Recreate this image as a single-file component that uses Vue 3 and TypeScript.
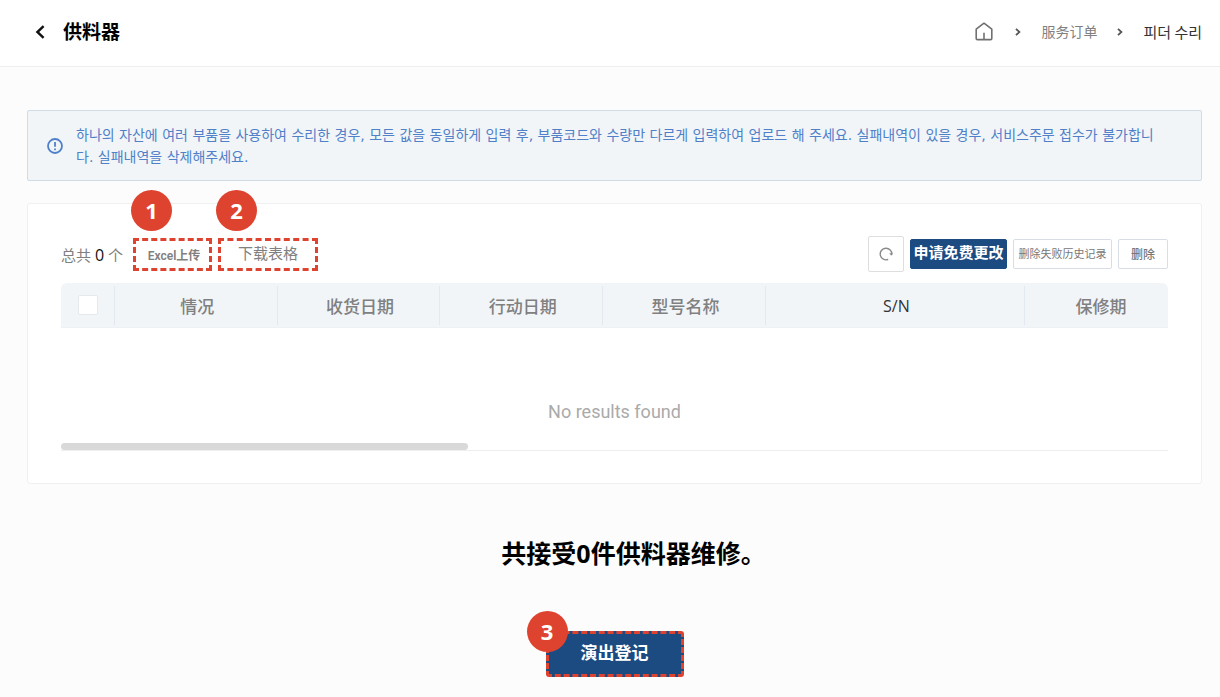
<script setup lang="ts">
import { ref } from 'vue'

interface Column {
  label: string
  cls: string
}

const columns: Column[] = [
  { label: '情况', cls: 'std' },
  { label: '收货日期', cls: 'std' },
  { label: '行动日期', cls: 'std' },
  { label: '型号名称', cls: 'std' },
  { label: 'S/N', cls: 'serial' },
  { label: '保修期', cls: 'warranty' },
]

const total = ref<number>(0)
const allSelected = ref<boolean>(false)
</script>

<template>
  <div class="page">
    <header class="topbar">
      <button class="back" type="button" aria-label="Back">
        <svg width="10" height="14" viewBox="0 0 10 14" fill="none" stroke="#111" stroke-width="2.4">
          <path d="M8.6 1.2 2.4 7l6.2 5.8" />
        </svg>
      </button>
      <h1>供料器</h1>
      <nav class="crumbs">
        <a href="#" class="home" aria-label="Home">
          <svg width="18" height="19" viewBox="0 0 18 19" fill="none" stroke="#707070" stroke-width="1.6" stroke-linejoin="round">
            <path d="M1.2 7.2 9 1.2l7.8 6v9.2a1.2 1.2 0 0 1-1.2 1.2H2.4a1.2 1.2 0 0 1-1.2-1.2z" />
            <path d="M9 17.4v-6.6" />
          </svg>
        </a>
        <svg class="sep" width="6" height="8" viewBox="0 0 6 8" fill="none" stroke="#555" stroke-width="1.8">
          <path d="M1 .8 4.4 4 1 7.2" />
        </svg>
        <a href="#">服务订单</a>
        <svg class="sep" width="6" height="8" viewBox="0 0 6 8" fill="none" stroke="#555" stroke-width="1.8">
          <path d="M1 .8 4.4 4 1 7.2" />
        </svg>
        <span class="current">피더 수리</span>
      </nav>
    </header>

    <main>
      <section class="notice">
        <svg width="16" height="16" viewBox="0 0 16 16" fill="none" stroke="#4f80c8" stroke-width="1.8">
          <circle cx="8" cy="8" r="7" />
          <path d="M8 4v4.8M8 10.4v1.8" />
        </svg>
        <p>
          하나의 자산에 여러 부품을 사용하여 수리한 경우, 모든 값을 동일하게 입력 후, 부품코드와 수량만 다르게 입력하여 업로드 해 주세요. 실패내역이 있을 경우, 서비스주문 접수가 불가합니다. 실패내역을 삭제해주세요.
        </p>
      </section>

      <section class="card">
        <div class="toolbar">
          <p class="count">总共 <b>{{ total }}</b> 个</p>
          <button class="marked upload" type="button">Excel上传<span class="badge">1</span></button>
          <button class="marked download" type="button">下载表格<span class="badge">2</span></button>
          <div class="actions">
            <button class="refresh" type="button" aria-label="Refresh">
              <svg width="14" height="14" viewBox="0 0 14 14" fill="none" stroke="#8a8a8a" stroke-width="1.4">
                <path d="M9.2 12.4A5.8 5.8 0 1 1 12.8 7.6" />
                <path d="M10.2 6.2h3.6l-1.5 2.6z" fill="#8a8a8a" stroke="none" />
              </svg>
            </button>
            <button class="primary" type="button">申请免费更改</button>
            <button class="history" type="button">删除失败历史记录</button>
            <button class="remove" type="button">删除</button>
          </div>
        </div>

        <table>
          <colgroup>
            <col class="check" />
            <col v-for="c in columns" :key="c.label" :class="c.cls" />
          </colgroup>
          <thead>
            <tr>
              <th><input v-model="allSelected" type="checkbox" aria-label="Select all" /></th>
              <th v-for="c in columns" :key="c.label" :class="c.cls">{{ c.label }}</th>
            </tr>
          </thead>
          <tbody>
            <tr>
              <td :colspan="columns.length + 1">No results found</td>
            </tr>
          </tbody>
        </table>
        <div class="track"><div class="thumb"></div></div>
      </section>

      <p class="summary">共接受{{ total }}件供料器维修。</p>
      <button class="marked submit" type="button">演出登记<span class="badge">3</span></button>
    </main>
  </div>
</template>

<style>
body {
  margin: 0;
  background: #fcfcfc;
}
</style>

<style scoped>
.page {
  font-family: "Open Sans", "Noto Sans CJK SC", sans-serif;
  color: #808080;
}
.page *,
.page *::before {
  box-sizing: border-box;
}
h1,
p {
  margin: 0;
}
button {
  font-family: inherit;
  padding: 0;
  white-space: nowrap;
  cursor: pointer;
}
a {
  color: inherit;
  text-decoration: none;
}
svg {
  display: block;
  flex: none;
}
.topbar {
  display: flex;
  align-items: center;
  height: 67px;
  padding: 0 18px 3px 35px;
  background: #fff;
  border-bottom: 1px solid #eee;
}
.back {
  border: 0;
  background: none;
}
h1 {
  margin-left: 18px;
  font-size: 19px;
  line-height: 28px;
  color: #000;
}
.crumbs {
  display: flex;
  align-items: center;
  margin-left: auto;
  font-size: 14px;
  line-height: 20px;
}
.home {
  margin-right: 2px;
}
.sep {
  margin: 0 20px;
}
.current {
  font-family: "Noto Sans CJK KR", sans-serif;
  font-size: 15px;
  color: #333;
}
main {
  padding: 43px 18px 20px 27px;
}
.notice {
  display: flex;
  align-items: center;
  min-height: 71px;
  padding: 0 40px 0 19px;
  background: #f1f5f8;
  border: 1px solid #cfdde8;
  border-radius: 2px;
}
.notice p {
  margin-left: 13px;
  font-family: "DejaVu Sans", "Noto Sans CJK KR", sans-serif;
  font-size: 14px;
  line-height: 22px;
  color: #4f80c8;
}
.card {
  margin-top: 22px;
  padding: 31px 33px 32px;
  background: #fff;
  border: 1px solid #f0f0f0;
  border-radius: 3px;
}
.toolbar {
  display: flex;
  align-items: center;
  height: 38px;
}
.count {
  width: 72px;
  padding-top: 2px;
  font-size: 15px;
  line-height: 22px;
  white-space: nowrap;
}
.count b {
  font-size: 16px;
  font-weight: 500;
  color: #111;
}
.marked {
  position: relative;
  border: 3px dashed #de4330;
  background: #fff;
  color: #808080;
}
.badge {
  position: absolute;
  display: flex;
  align-items: center;
  justify-content: center;
  width: 41px;
  height: 41px;
  top: -51px;
  left: -5px;
  border-radius: 50%;
  background: #de4330;
  color: #fff;
  font: 700 22px/41px "Open Sans", sans-serif;
}
.upload {
  width: 79px;
  height: 33px;
  padding-left: 3px;
  font-family: Roboto, "Noto Sans CJK SC", sans-serif;
  font-size: 12px;
  font-weight: 600;
}
.download {
  width: 100px;
  height: 33px;
  margin-left: 6px;
  padding-bottom: 3px;
  font-size: 15px;
}
.actions {
  display: flex;
  align-items: center;
  gap: 6px;
  margin-left: auto;
}
.actions button {
  height: 30px;
  border: 1px solid #d9dee6;
  border-radius: 2px;
  background: #fff;
  color: #777;
}
.actions .refresh {
  display: grid;
  place-items: center;
  width: 36px;
  height: 36px;
  border-color: #dedede;
}
.actions .primary {
  width: 97px;
  padding-bottom: 5px;
  border-color: #1c4b82;
  background: #1c4b82;
  color: #fff;
  font-size: 15px;
  font-weight: 700;
}
.actions .history {
  width: 99px;
  padding-bottom: 2px;
  font-size: 11px;
}
.actions .remove {
  width: 50px;
  font-size: 12px;
  font-weight: 500;
}
table {
  width: 100%;
  margin-top: 10px;
  table-layout: fixed;
  border-collapse: separate;
  border-spacing: 0;
}
col.check {
  width: 53px;
}
col.std {
  width: 14.7%;
}
col.serial {
  width: 23.4%;
}
th {
  position: relative;
  height: 45px;
  padding: 4px 0 0 4px;
  background: #f1f5f8;
  border-bottom: 1px solid #edf1f5;
  font-size: 17px;
  line-height: 24px;
  font-weight: 500;
}
th + th::before {
  content: "";
  position: absolute;
  left: 0;
  top: 3px;
  bottom: 2px;
  width: 1px;
  background: #e2e9f0;
}
th:first-child {
  padding: 0;
  border-top-left-radius: 6px;
}
th:last-child {
  padding-left: 10px;
  border-top-right-radius: 6px;
}
th.serial {
  padding-top: 2px;
  font-size: 16px;
  color: #333;
}
input {
  display: block;
  width: 20px;
  height: 20px;
  margin: 0 auto;
  appearance: none;
  border: 1px solid #e4e9ee;
  border-radius: 2px;
  background: #fff;
}
input:checked {
  background: #1c4b82;
}
td {
  height: 115px;
  padding: 53px 0 0;
  text-align: center;
  font-family: Roboto, sans-serif;
  font-size: 18px;
  line-height: 24px;
  color: #aaa;
}
.track {
  height: 8px;
  border-bottom: 1px solid #eee;
}
.thumb {
  width: 407px;
  height: 7px;
  border-radius: 4px;
  background: #d9d9d9;
}
.summary {
  margin-top: 51px;
  padding-left: 38px;
  text-align: center;
  font-size: 25px;
  line-height: 36px;
  font-weight: 700;
  color: #000;
}
.submit {
  display: block;
  width: 138px;
  height: 46px;
  margin: 60px auto 0;
  padding-bottom: 5px;
  border-radius: 3px;
  background: #1c4b82;
  color: #fff;
  font-size: 17px;
  font-weight: 700;
}
.submit .badge {
  top: -23px;
  left: -22px;
}
</style>
